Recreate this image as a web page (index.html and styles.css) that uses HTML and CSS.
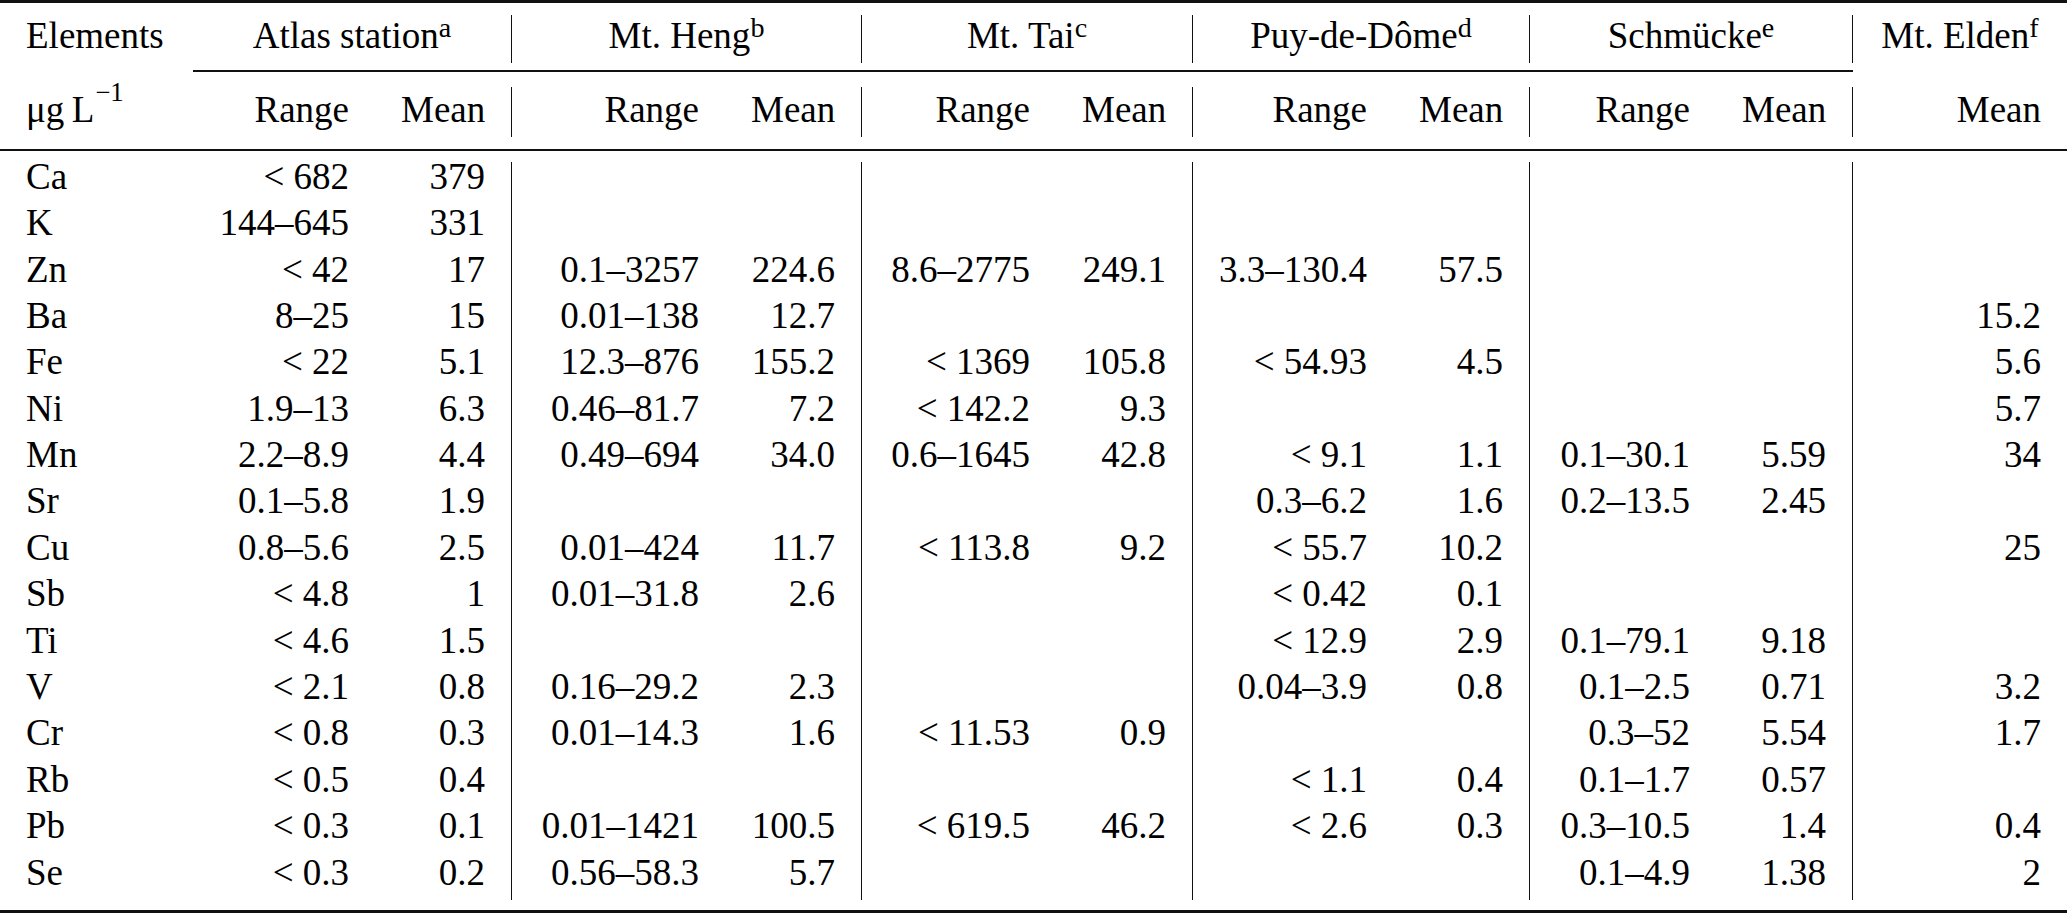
FILE: index.html
```html
<!DOCTYPE html>
<html lang="en">
<head>
<meta charset="utf-8">
<title>Trace elements in cloud water</title>
<link rel="stylesheet" href="styles.css">
</head>
<body>
<div class="table">
  <div class="rule heavy"></div>

  <div class="grid head1">
    <div class="cell left">Elements</div>
    <div class="cell group">Atlas station<sup class="fn">a</sup></div>
    <div class="bar"></div>
    <div class="cell group">Mt. Heng<sup class="fn">b</sup></div>
    <div class="bar"></div>
    <div class="cell group">Mt. Tai<sup class="fn">c</sup></div>
    <div class="bar"></div>
    <div class="cell group">Puy-de-Dôme<sup class="fn">d</sup></div>
    <div class="bar"></div>
    <div class="cell group">Schmücke<sup class="fn">e</sup></div>
    <div class="bar"></div>
    <div class="cell center">Mt. Elden<sup class="fn">f</sup></div>
  </div>

  <div class="grid cmid-row"><div class="cmidrule"></div></div>

  <div class="grid head2">
    <div class="cell left">μg&#8201;L<sup class="exp">−1</sup></div>
    <div class="cell num">Range</div>
    <div class="cell num">Mean</div>
    <div class="bar"></div>
    <div class="cell num">Range</div>
    <div class="cell num">Mean</div>
    <div class="bar"></div>
    <div class="cell num">Range</div>
    <div class="cell num">Mean</div>
    <div class="bar"></div>
    <div class="cell num">Range</div>
    <div class="cell num">Mean</div>
    <div class="bar"></div>
    <div class="cell num">Range</div>
    <div class="cell num">Mean</div>
    <div class="bar"></div>
    <div class="cell num">Mean</div>
  </div>

  <div class="rule"></div>

  <div class="grid body">
    <div class="bar b1"></div>
    <div class="bar b2"></div>
    <div class="bar b3"></div>
    <div class="bar b4"></div>
    <div class="bar b5"></div>

    <div class="cell left">Ca</div><div class="cell num">&lt; 682</div><div class="cell num">379</div><div class="cell num"></div><div class="cell num"></div><div class="cell num"></div><div class="cell num"></div><div class="cell num"></div><div class="cell num"></div><div class="cell num"></div><div class="cell num"></div><div class="cell num"></div>
    <div class="cell left">K</div><div class="cell num">144–645</div><div class="cell num">331</div><div class="cell num"></div><div class="cell num"></div><div class="cell num"></div><div class="cell num"></div><div class="cell num"></div><div class="cell num"></div><div class="cell num"></div><div class="cell num"></div><div class="cell num"></div>
    <div class="cell left">Zn</div><div class="cell num">&lt; 42</div><div class="cell num">17</div><div class="cell num">0.1–3257</div><div class="cell num">224.6</div><div class="cell num">8.6–2775</div><div class="cell num">249.1</div><div class="cell num">3.3–130.4</div><div class="cell num">57.5</div><div class="cell num"></div><div class="cell num"></div><div class="cell num"></div>
    <div class="cell left">Ba</div><div class="cell num">8–25</div><div class="cell num">15</div><div class="cell num">0.01–138</div><div class="cell num">12.7</div><div class="cell num"></div><div class="cell num"></div><div class="cell num"></div><div class="cell num"></div><div class="cell num"></div><div class="cell num"></div><div class="cell num">15.2</div>
    <div class="cell left">Fe</div><div class="cell num">&lt; 22</div><div class="cell num">5.1</div><div class="cell num">12.3–876</div><div class="cell num">155.2</div><div class="cell num">&lt; 1369</div><div class="cell num">105.8</div><div class="cell num">&lt; 54.93</div><div class="cell num">4.5</div><div class="cell num"></div><div class="cell num"></div><div class="cell num">5.6</div>
    <div class="cell left">Ni</div><div class="cell num">1.9–13</div><div class="cell num">6.3</div><div class="cell num">0.46–81.7</div><div class="cell num">7.2</div><div class="cell num">&lt; 142.2</div><div class="cell num">9.3</div><div class="cell num"></div><div class="cell num"></div><div class="cell num"></div><div class="cell num"></div><div class="cell num">5.7</div>
    <div class="cell left">Mn</div><div class="cell num">2.2–8.9</div><div class="cell num">4.4</div><div class="cell num">0.49–694</div><div class="cell num">34.0</div><div class="cell num">0.6–1645</div><div class="cell num">42.8</div><div class="cell num">&lt; 9.1</div><div class="cell num">1.1</div><div class="cell num">0.1–30.1</div><div class="cell num">5.59</div><div class="cell num">34</div>
    <div class="cell left">Sr</div><div class="cell num">0.1–5.8</div><div class="cell num">1.9</div><div class="cell num"></div><div class="cell num"></div><div class="cell num"></div><div class="cell num"></div><div class="cell num">0.3–6.2</div><div class="cell num">1.6</div><div class="cell num">0.2–13.5</div><div class="cell num">2.45</div><div class="cell num"></div>
    <div class="cell left">Cu</div><div class="cell num">0.8–5.6</div><div class="cell num">2.5</div><div class="cell num">0.01–424</div><div class="cell num">11.7</div><div class="cell num">&lt; 113.8</div><div class="cell num">9.2</div><div class="cell num">&lt; 55.7</div><div class="cell num">10.2</div><div class="cell num"></div><div class="cell num"></div><div class="cell num">25</div>
    <div class="cell left">Sb</div><div class="cell num">&lt; 4.8</div><div class="cell num">1</div><div class="cell num">0.01–31.8</div><div class="cell num">2.6</div><div class="cell num"></div><div class="cell num"></div><div class="cell num">&lt; 0.42</div><div class="cell num">0.1</div><div class="cell num"></div><div class="cell num"></div><div class="cell num"></div>
    <div class="cell left">Ti</div><div class="cell num">&lt; 4.6</div><div class="cell num">1.5</div><div class="cell num"></div><div class="cell num"></div><div class="cell num"></div><div class="cell num"></div><div class="cell num">&lt; 12.9</div><div class="cell num">2.9</div><div class="cell num">0.1–79.1</div><div class="cell num">9.18</div><div class="cell num"></div>
    <div class="cell left">V</div><div class="cell num">&lt; 2.1</div><div class="cell num">0.8</div><div class="cell num">0.16–29.2</div><div class="cell num">2.3</div><div class="cell num"></div><div class="cell num"></div><div class="cell num">0.04–3.9</div><div class="cell num">0.8</div><div class="cell num">0.1–2.5</div><div class="cell num">0.71</div><div class="cell num">3.2</div>
    <div class="cell left">Cr</div><div class="cell num">&lt; 0.8</div><div class="cell num">0.3</div><div class="cell num">0.01–14.3</div><div class="cell num">1.6</div><div class="cell num">&lt; 11.53</div><div class="cell num">0.9</div><div class="cell num"></div><div class="cell num"></div><div class="cell num">0.3–52</div><div class="cell num">5.54</div><div class="cell num">1.7</div>
    <div class="cell left">Rb</div><div class="cell num">&lt; 0.5</div><div class="cell num">0.4</div><div class="cell num"></div><div class="cell num"></div><div class="cell num"></div><div class="cell num"></div><div class="cell num">&lt; 1.1</div><div class="cell num">0.4</div><div class="cell num">0.1–1.7</div><div class="cell num">0.57</div><div class="cell num"></div>
    <div class="cell left">Pb</div><div class="cell num">&lt; 0.3</div><div class="cell num">0.1</div><div class="cell num">0.01–1421</div><div class="cell num">100.5</div><div class="cell num">&lt; 619.5</div><div class="cell num">46.2</div><div class="cell num">&lt; 2.6</div><div class="cell num">0.3</div><div class="cell num">0.3–10.5</div><div class="cell num">1.4</div><div class="cell num">0.4</div>
    <div class="cell left">Se</div><div class="cell num">&lt; 0.3</div><div class="cell num">0.2</div><div class="cell num">0.56–58.3</div><div class="cell num">5.7</div><div class="cell num"></div><div class="cell num"></div><div class="cell num"></div><div class="cell num"></div><div class="cell num">0.1–4.9</div><div class="cell num">1.38</div><div class="cell num">2</div>
  </div>

  <div class="rule heavy"></div>
</div>
</body>
</html>
```

FILE: styles.css
```css
:root {
  --cols: 193px 182px 136px 1px 213px 136px 1px 194px 136px 1px 200px 136px 1px 186px 136px 1px 214px;
}

html, body {
  margin: 0;
  padding: 0;
  background: #ffffff;
}

body {
  color: #000000;
  font-family: "Liberation Serif", "Times New Roman", serif;
  font-size: 37px;
}

.table {
  width: 2067px;
}

.rule {
  height: 2px;
  background: #111111;
}

.rule.heavy {
  height: 3px;
}

.grid {
  display: grid;
  grid-template-columns: var(--cols);
}

.head1 {
  height: 67px;
  align-items: center;
}

.head2 {
  height: 77px;
  align-items: center;
}

.cmid-row {
  height: 2px;
}

.cmidrule {
  grid-column: 2 / 17;
  background: #111111;
}

.cell {
  padding: 0 26px;
  white-space: nowrap;
  line-height: 1.15;
}

.left {
  text-align: left;
}

.num {
  text-align: right;
}

.center {
  text-align: center;
}

.group {
  grid-column: span 2;
  text-align: center;
}

.bar {
  align-self: stretch;
  background: #111111;
}

.head1 .bar {
  margin: 12px 0 7px;
}

.head2 .bar {
  margin: 15px 0 12px;
}

.body {
  grid-template-rows: repeat(16, 46.4px);
  padding: 2.8px 0 13.8px;
  align-items: center;
}

.body .bar {
  grid-row: 1 / 17;
  margin: 8.2px 0 -3.8px;
}

.b1 { grid-column: 4; }
.b2 { grid-column: 7; }
.b3 { grid-column: 10; }
.b4 { grid-column: 13; }
.b5 { grid-column: 16; }

.fn {
  font-size: 0.76em;
  vertical-align: 0.38em;
  line-height: 0;
}

.exp {
  font-size: 0.72em;
  vertical-align: 0.78em;
  line-height: 0;
  margin-left: 1px;
}
```
